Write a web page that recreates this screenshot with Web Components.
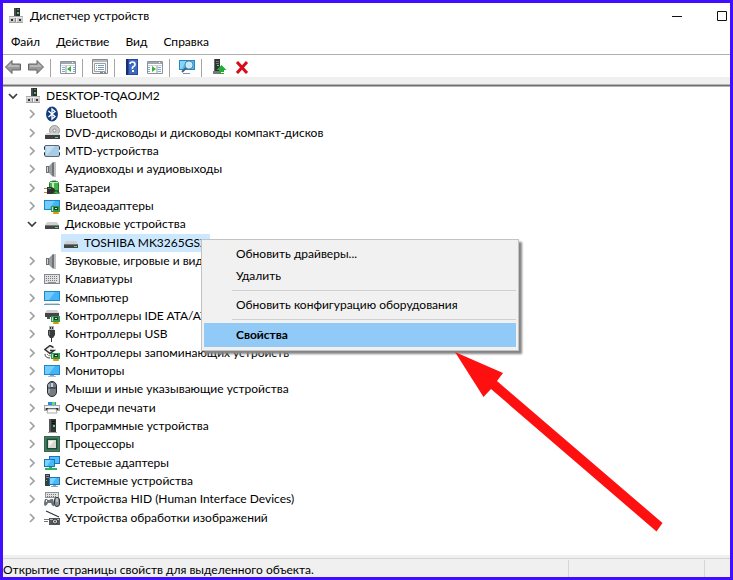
<!DOCTYPE html>
<html lang="ru">
<head>
<meta charset="utf-8">
<meta name="viewport" content="width=device-width, initial-scale=1">
<title>Диспетчер устройств</title>
<style>
  html, body {
    margin: 0;
    min-height: 100vh;
  }
  body {
    display: flex;
    position: relative;
    overflow: hidden;
    font: 12px/16px Lato, "Open Sans", sans-serif;
    color: #000;
  }
</style>
</head>
<body>
<device-manager></device-manager>

<script>
const MONITOR = `<path d="M0 2h16v10H0z" fill="#1b86c9"/><path d="M1 3h14v8H1z" fill="#42b4f7"/><path d="M1 3h10L5 11H1z" fill="#72cdfd"/>`;
const BOARD = `<path d="M7 8h9v6H7z" fill="#2f9a4b"/><path d="M10 9h4v3h-4z" fill="#17422c"/><path d="M11 10h2v1h-2z" fill="#c8e0cb"/><path d="M8 9h1v4H8z" fill="#b8dfae"/><path d="M9 14h6v2H9z" fill="#f6b21b"/><path d="M11 14v2M13 14v2" stroke="#c67a08"/>`;

const ICONS = {
  computer: `<path d="M6 0h6v9H6z" fill="#4a4d50"/><path d="M8 0h4v9H8z" fill="#2b2d2f"/><path d="M9 1h2v1H9z" fill="#777"/><path d="M9 4h2v2H9z" fill="#3fc765"/><path d="M1 8h14v7H1z" fill="#c9c9c9"/><path d="M1 8h14v1H1z" fill="#a9a9a9"/><path d="M2 9h12v1H2z" fill="#ececec"/><path d="M1 14h14v1H1z" fill="#a5a5a5"/><path d="M3 11h2v2H3zM11 11h2v2h-2z" fill="#333"/><path d="M7 10h1v4H7z" fill="#8d8d8d"/><path d="M8 10h1v4H8z" fill="#f4f4f4"/>`,
  bluetooth: `<ellipse cx="8" cy="8" rx="6" ry="7.500" fill="#143d80"/><path d="M4.500 5l6.500 5.500L8 13V3l3 2.500L4.500 11" fill="none" stroke="#fff" stroke-width="1.300"/>`,
  dvd: `<circle cx="10.500" cy="5.500" r="5" fill="#c9c9c9" stroke="#999"/><circle cx="10.500" cy="5.500" r="1.500" fill="#fff" stroke="#8b8b8b"/><path d="M3 8h11l2 2H1z" fill="#d4d4d4"/><path d="M1 10h15v4H1z" fill="#3f4042"/><path d="M11 12h3v1h-3z" fill="#4fe070"/>`,
  mtd: `<rect x=".5" y="2.500" width="15" height="11" rx="1.500" fill="#a9cbe6" stroke="#5b6873"/><path d="M2 3h9L3 12H2z" fill="#c4dff3"/><path d="M0 4h1v2H0zM0 10h1v2H0zM15 4h1v2h-1zM15 10h1v2h-1z" fill="#2b2f33"/><path d="M0 7h1v2H0zM15 7h1v2h-1z" fill="#fff"/>`,
  speaker: `<path d="M2 5h4v7H2z" fill="#6d7176"/><path d="M3 6h1v5H3z" fill="#d4d7d9"/><path d="M5 5l4-4v15l-4-4z" fill="#9a9ea2"/><path d="M8 2l2-1v15l-2-2z" fill="#6f7377"/><path d="M10 1h2v15h-2z" fill="#bfc3c6"/>`,
  battery: `<path d="M8 0h4v2H8z" fill="#b9b9b9"/><rect x="5.500" y="1.500" width="9" height="12" rx="2" fill="#3fb545" stroke="#1f7a2a"/><path d="M8 3h2v5H8z" fill="#c5f4bb"/><path d="M6 2h8v1H6z" fill="#d9d9d9"/><path d="M3 7h4q4 1 4 3.500T7 14H3z" fill="#2f3030"/><path d="M4 8h3v1H4z" fill="#777"/><path d="M0 8h3v1H0zM0 12h3v1H0z" fill="#c28a2a"/><path d="M11 11q4-1 4 3" fill="none" stroke="#222"/>`,
  display: `${MONITOR}${BOARD}`,
  disk: `<path d="M3 6h10l2 3H1z" fill="#d0d0d0"/><path d="M1 9h14v4H1z" fill="#434548"/><path d="M1 9h14v1H1z" fill="#77797b"/><path d="M11 11h3v1h-3z" fill="#4ee36c"/>`,
  keyboard: `<path d="M0 3h16v10H0z" fill="#85898d"/><path d="M1 4h14v8H1z" fill="#dfe1e3"/><path d="M2 5.500h12M2 7.500h12M2 9.500h12" stroke="#777b80" stroke-dasharray="1 1"/><path d="M4 11h8v1H4z" fill="#8c9094"/>`,
  pc: `<path d="M0 1h16v10H0z" fill="#1b86c9"/><path d="M1 2h14v8H1z" fill="#42b4f7"/><path d="M1 2h10L5 10H1z" fill="#72cdfd"/><path d="M1 13h14v1H1z" fill="#c6d6e2"/><path d="M0 14h16v1H0z" fill="#6f9bbb"/>`,
  ide: `<path d="M3 2h10l2 3H1z" fill="#d0d0d0"/><path d="M1 5h14v4H1z" fill="#434548"/><path d="M3 9h3v2H3z" fill="#555"/>${BOARD}`,
  usb: `<path d="M5 0h5v4H5z" fill="#aaa"/><path d="M6 1h1v2H6zM8 1h1v2H8z" fill="#333"/><path d="M4 4h7v5l-2 3H6l-2-3z" fill="#393b3d"/><path d="M5 5h1v4H5z" fill="#777"/><path d="M7 12h1v4H7z" fill="#333"/>`,
  storage: `<path d="M9.500 2.500L6 .5 1 4.500l5 4 4-3H6" fill="#f0f0f0" stroke="#333" stroke-width="1.500"/><path d="M1 9q0 4 5 4" fill="none" stroke="#444"/><path d="M3 9q1 2 4 2" fill="none" stroke="#888"/>${BOARD}`,
  monitor: MONITOR + `<path d="M6 12h4v1H6z" fill="#8ca5b5"/><path d="M4 13h8v1H4z" fill="#b0c1cc"/>`,
  mouse: `<rect x="3.500" y=".5" width="9" height="15" rx="4.500" fill="#767c82" stroke="#282c30"/><path d="M5 3v9" stroke="#c9cdd1"/><path d="M8 1v6M4 7h8" stroke="#2a2e32"/><path d="M7 2h2v4H7z" fill="#b7dafa"/>`,
  printer: `<path d="M4 2h8v4H4z" fill="#278fdc"/><path d="M8 2h3v3H8z" fill="#65dd67"/><path d="M0 5h16v6H0z" fill="#a2a6aa"/><path d="M1 6h14v2H1z" fill="#f4f4f4"/><path d="M2 8h12v2H2z" fill="#303336"/><path d="M4 9h8l1 4H3z" fill="#fff" stroke="#aaa"/>`,
  tower: `<path d="M5 1h7v13H5z" fill="#303234"/><path d="M5 1h2v13H5z" fill="#55585b"/><path d="M8 3h3v1H8zM8 5h3v1H8z" fill="#111"/><path d="M9 7h2v2H9z" fill="#49df68"/><path d="M4 14h9v1H4z" fill="#a3a3a3"/>`,
  cpu: `<path d="M0 0h16v16H0z" fill="#34684e"/><path d="M1.500 1.500h13v13h-13z" fill="none" stroke="#5f8f76" stroke-dasharray="1 1"/><path d="M3 3h10v10H3z" fill="#1d4c35"/><path d="M4 4h8v8H4z" fill="#d8d8d2"/><path d="M5 5h5L5 11z" fill="#f4f4f0"/>`,
  network: `<path d="M5 1h11v8H5z" fill="#1876ba"/><path d="M6 2h9v6H6z" fill="#55bff9"/><path d="M0 4h11v8H0z" fill="#1876ba"/><path d="M1 5h9v6H1z" fill="#4ab7f7"/><path d="M1 5h6l-4 6H1z" fill="#7dd3ff"/><path d="M5 12h3v1h5v2H1v-2h4z" fill="#30b357"/>`,
  system: `<path d="M1 1h5v12H1z" fill="#3b3e41"/><path d="M2 2h3v1H2zM2 4h3v1H2z" fill="#85898d"/><path d="M2 7h1v1H2z" fill="#46df68"/><path d="M5 4h11v8H5z" fill="#1876ba"/><path d="M6 5h9v6H6z" fill="#4ab7f7"/><path d="M6 5h6l-4 6H6z" fill="#7dd3ff"/><path d="M9 12h3v1H9zM7 13h7v1H7z" fill="#8ba4b4"/>`,
  hid: `<path d="M1 1h14v6H1z" fill="#8e9296"/><path d="M2 2h12v4H2z" fill="#e0e2e3"/><path d="M3 3.500h10M3 5.500h10" stroke="#777" stroke-dasharray="1 1"/><path d="M1 15q-2-1 0-7h2q1 2 4 0h2q2 6 1 7-2 1-3-3H4q-1 3-3 3z" fill="#6b737b"/><path d="M2 9h1v2H2z" fill="#e7eef6"/><rect x="10.500" y="6.500" width="5" height="9" rx="2.500" fill="#8c9298" stroke="#303438"/><path d="M13 7v4" stroke="#dceeff"/>`,
  imaging: `<path d="M2 1l13 6" stroke="#333" stroke-width="1.200"/><path d="M0 9h5v1H0zM0 11h4v1H0z" fill="#777"/><path d="M5 8h11v7H5z" fill="#55595c"/><path d="M6 9h9v1H6z" fill="#babdc0"/><circle cx="11" cy="11.500" r="2.500" fill="#dadddf" stroke="#292c2e"/><circle cx="11" cy="11.500" r="1" fill="#444"/>`,
  back: `<path d="M.5 8L7 1.500V5h8.500v6H7v3.500z" fill="#999" stroke="#626262"/><path d="M2 8l4-4v2h8v2z" fill="#b8b8b8"/>`,
  forward: `<path d="M15.500 8L9 1.500V5H.5v6H9v3.500z" fill="#999" stroke="#626262"/><path d="M14 8l-4-4v2H2v2z" fill="#b8b8b8"/>`,
  tree: `<path d="M.5 2.500h15v12H.5z" fill="#fff" stroke="#8a939c"/><path d="M1 3h14v2H1z" fill="#9ca7b0"/><path d="M12 3h1v1h-1z" fill="#fff"/><path d="M1 6h14v1H1z" fill="#ccd2d6"/><path d="M6 7v7" stroke="#8a939c"/><path d="M2 8.500h3M2 10.500h3M2 12.500h3M13 8.500h2M13 10.500h2M13 12.500h2" stroke="#7faad0"/><path d="M11 7v6l-4-3z" fill="#33b13a"/>`,
  props: `<path d="M.5 .5h15v14H.5z" fill="#f4f4f4" stroke="#858a8f"/><path d="M1 1h14v2H1z" fill="#b5babf"/><path d="M2.500 4.500h11v8h-11z" fill="#fff" stroke="#999fa5"/><path d="M4 6.500h1M4 8.500h1M4 10.500h1M6 6.500h6M6 8.500h6M6 10.500h6" stroke="#7c9db8"/><path d="M8 13h3v1H8zM12 13h2v1h-2z" fill="#888"/>`,
  help: `<path d="M2 0h12v16H2z" fill="#234aa3"/><path d="M2 0h2v16H2z" fill="#153073"/><path d="M5 1h8v14H5z" fill="#4269c0"/><path d="M6 5q0-2 2.500-2T11 5.500Q11 7 9.500 7.500T8.500 10" fill="none" stroke="#fff" stroke-width="1.600"/><path d="M8 11h2v2H8z" fill="#fff"/>`,
  actions: `<path d="M.5 2.500h15v12H.5z" fill="#fff" stroke="#8a939c"/><path d="M1 3h14v2H1z" fill="#9ca7b0"/><path d="M12 3h1v1h-1z" fill="#fff"/><path d="M1 6h14v1H1z" fill="#ccd2d6"/><path d="M10 7v7" stroke="#8a939c"/><path d="M11 8.500h3M11 10.500h3M11 12.500h3M1 8.500h2M1 10.500h2M1 12.500h2" stroke="#7faad0"/><path d="M5 7v6l4-3z" fill="#33b13a"/>`,
  scan: `<path d="M0 1h16v10H0z" fill="#2588c5"/><path d="M1 2h14v8H1z" fill="#50b9ee"/><path d="M1 2h6l-4 8H1z" fill="#86d4fa"/><path d="M4 14h7v1H4z" fill="#7896a9"/><path d="M8 8l-5 5" stroke="#45657b" stroke-width="2"/><circle cx="10" cy="6" r="3.500" fill="#c5e9fb" stroke="#e9f4fa"/><circle cx="10" cy="6" r="4" fill="none" stroke="#497894" stroke-width=".8"/>`,
  update: `<path d="M3 0h6v12H3z" fill="#303234"/><path d="M3 0h1v12H3z" fill="#686b6e"/><path d="M5 2h3v1H5zM5 4h3v1H5z" fill="#777"/><path d="M6 6h2v1H6z" fill="#43e46a"/><path d="M2 12h8v3H2z" fill="#777"/><path d="M10.500 6l5 5H13v2H8v-2H5.500z" fill="#27aa37"/><path d="M8 14h5v1H8z" fill="#27aa37"/>`,
  remove: `<path d="M3 3l10 11M13 3L3 14" fill="none" stroke="#d80b17" stroke-width="3"/>`,
  minimize: `<path d="M3 8h10v1H3z" fill="#111"/>`,
  maximize: `<path d="M3.500 3.500h9v9h-9z" fill="none" stroke="#111"/>`,
  closed: `<path d="M6 4l4 4-4 4" fill="none" stroke="#a0a0a0" stroke-width="1.700"/>`,
  open: `<path d="M4 6l4 4 4-4" fill="none" stroke="#3c3c3c" stroke-width="1.700"/>`,
};

const TREE = [
  [0, "computer", "DESKTOP-TQAOJM2", "open"],
  [1, "bluetooth", "Bluetooth", "closed"],
  [1, "dvd", "DVD-дисководы и дисководы компакт-дисков", "closed"],
  [1, "mtd", "MTD-устройства", "closed"],
  [1, "speaker", "Аудиовходы и аудиовыходы", "closed"],
  [1, "battery", "Батареи", "closed"],
  [1, "display", "Видеоадаптеры", "closed"],
  [1, "disk", "Дисковые устройства", "open"],
  [2, "disk", "TOSHIBA MK3265GSX", "", true],
  [1, "speaker", "Звуковые, игровые и видеоустройства", "closed"],
  [1, "keyboard", "Клавиатуры", "closed"],
  [1, "pc", "Компьютер", "closed"],
  [1, "ide", "Контроллеры IDE ATA/ATAPI", "closed"],
  [1, "usb", "Контроллеры USB", "closed"],
  [1, "storage", "Контроллеры запоминающих устройств", "closed"],
  [1, "monitor", "Мониторы", "closed"],
  [1, "mouse", "Мыши и иные указывающие устройства", "closed"],
  [1, "printer", "Очереди печати", "closed"],
  [1, "tower", "Программные устройства", "closed"],
  [1, "cpu", "Процессоры", "closed"],
  [1, "network", "Сетевые адаптеры", "closed"],
  [1, "system", "Системные устройства", "closed"],
  [1, "hid", "Устройства HID (Human Interface Devices)", "closed"],
  [1, "imaging", "Устройства обработки изображений", "closed"],
];

class DmIcon extends HTMLElement {
  connectedCallback() {
    this.attachShadow({ mode: "open" });
    this.shadowRoot.innerHTML = `
      <style>
        :host { display: block; flex: none; width: 16px; height: 16px; }
        svg { display: block; width: 100%; height: 100%; }
      </style>
      <svg viewBox="0 0 16 16" aria-hidden="true">${ICONS[this.getAttribute("name")] || ""}</svg>
    `;
  }
}

/** Icon-only button, used in the title bar and in the toolbar. */
class DmButton extends HTMLElement {
  connectedCallback() {
    this.attachShadow({ mode: "open" });
    this.shadowRoot.innerHTML = `
      <style>
        :host { display: block; width: 20px; }
        button {
          display: flex;
          align-items: center;
          justify-content: center;
          width: 100%;
          height: 20px;
          padding: 0;
          border: 0;
          background: none;
        }
        button:hover { background: #e5f3ff; }
      </style>
      <button type="button" aria-label="${this.getAttribute("label")}">
        <dm-icon name="${this.getAttribute("icon")}"></dm-icon>
      </button>
    `;
  }
}

class MenuBar extends HTMLElement {
  connectedCallback() {
    this.attachShadow({ mode: "open" });
    this.shadowRoot.innerHTML = `
      <style>
        :host { display: flex; align-items: center; height: 25px; }
        ::slotted(button) {
          height: 22px;
          padding: 0 8px;
          border: 0;
          background: none;
          font: inherit;
          color: inherit;
        }
      </style>
      <slot></slot>
    `;
  }
}

class ToolBar extends HTMLElement {
  connectedCallback() {
    this.attachShadow({ mode: "open" });
    this.shadowRoot.innerHTML = `
      <style>
        :host {
          display: flex;
          align-items: flex-end;
          gap: 3px;
          height: 22px;
          border-top: 1px solid #b0b0b0;
        }
        ::slotted(i) {
          width: 1px;
          height: 18px;
          margin: 0 4px 0 1px;
          background: #a5a5a5;
        }
      </style>
      <slot></slot>
    `;
  }
}

class TreeRow extends HTMLElement {
  connectedCallback() {
    const state = this.getAttribute("state");
    const expander = state
      ? `<button type="button" aria-label="${state === "open" ? "Свернуть" : "Развернуть"}"><dm-icon name="${state}"></dm-icon></button>`
      : `<span class="blank"></span>`;
    this.attachShadow({ mode: "open" });
    this.shadowRoot.innerHTML = `
      <style>
        :host {
          display: flex;
          align-items: center;
          min-height: 0;
          padding-left: 1px;
          white-space: nowrap;
        }
        :host([level="1"]) { padding-left: 20px; }
        :host([level="2"]) { padding-left: 39px; }
        button, .blank { flex: none; width: 19px; height: 16px; padding: 0; border: 0; background: none; }
        button dm-icon { margin-left: 1px; }
        .label { display: flex; align-items: center; gap: 5px; padding: 1px 2px; }
        :host([selected]) .label { background: #cce8ff; }
      </style>
      ${expander}
      <span class="label"><dm-icon name="${this.getAttribute("icon")}"></dm-icon><slot></slot></span>
    `;
  }
}

class DeviceTree extends HTMLElement {
  connectedCallback() {
    this.attachShadow({ mode: "open" });
    this.shadowRoot.innerHTML = `
      <style>
        :host {
          display: grid;
          grid-auto-rows: minmax(16px, 1fr);
          flex: 1;
          padding-bottom: 28px;
          background: #fff;
        }
      </style>
    `;
    TREE.forEach(([level, icon, text, state, selected]) => {
      const row = document.createElement("tree-row");
      row.setAttribute("role", "treeitem");
      row.setAttribute("level", level);
      row.setAttribute("aria-level", level + 1);
      row.setAttribute("icon", icon);
      row.setAttribute("state", state);
      row.toggleAttribute("selected", Boolean(selected));
      row.textContent = text;
      this.shadowRoot.appendChild(row);
    });
  }
}

class ContextMenu extends HTMLElement {
  connectedCallback() {
    this.attachShadow({ mode: "open" });
    this.shadowRoot.innerHTML = `
      <style>
        :host {
          display: flex;
          flex-direction: column;
          box-sizing: border-box;
          width: 318px;
          padding: 3px 2px;
          border: 1px solid #c3c3c3;
          background: #f1f1f1;
          box-shadow: 3px 3px 2px #858585;
        }
        ::slotted(button) {
          height: 22px;
          padding: 0 0 0 32px;
          border: 0;
          background: none;
          font: inherit;
          color: inherit;
          text-align: left;
        }
        ::slotted(button.default) { height: 24px; background: #91c9f7; font-weight: bold; }
        ::slotted(hr) {
          width: auto;
          height: 1px;
          margin: 3px 0 3px 28px;
          border: 0;
          background: #d0d0d0;
        }
      </style>
      <slot></slot>
    `;
  }
}

class PointerArrow extends HTMLElement {
  connectedCallback() {
    this.attachShadow({ mode: "open" });
    this.shadowRoot.innerHTML = `
      <style>
        :host { display: block; width: 208px; height: 180px; pointer-events: none; }
        svg { display: block; }
      </style>
      <svg width="208" height="180" viewBox="0 0 208 180" aria-hidden="true">
        <path d="M0 0l48 21-6 8 165.500 142-6 8.500L36 37l-7.500 8z" fill="#ff1010"/>
      </svg>
    `;
  }
}

class StatusBar extends HTMLElement {
  connectedCallback() {
    this.attachShadow({ mode: "open" });
    this.shadowRoot.innerHTML = `
      <style>
        :host {
          display: grid;
          grid-template-columns: 1fr 136px 26px;
          height: 18px;
          border-top: 1px solid #d5d5d5;
          margin-top: 3px;
          background: #f0f0f0;
          white-space: nowrap;
        }
        .text { line-height: 22px; height: 18px; overflow: hidden; }
        .cell { border-left: 1px solid #d5d5d5; margin-top: 1px; }
      </style>
      <div class="text"><slot></slot></div>
      <div class="cell"></div>
      <div class="cell"></div>
    `;
  }
}

class DeviceManager extends HTMLElement {
  connectedCallback() {
    this.attachShadow({ mode: "open" });
    this.shadowRoot.innerHTML = `
      <style>
        :host {
          display: flex;
          flex: 1;
          flex-direction: column;
          box-sizing: border-box;
          min-width: 0;
          min-height: 100vh;
          border: 3px solid #400fff;
          background: #fff;
        }
        header {
          display: flex;
          align-items: center;
          gap: 6px;
          height: 26px;
          padding-left: 5px;
        }
        h1 { flex: 1; margin: 0; font: inherit; }
        header dm-button { width: 46px; }
        header dm-button:last-child { width: 16px; margin-left: 8px; }
        .edge {
          height: 7px;
          background: #f0f0f0;
          border-bottom: 1px solid #b5b5b5;
        }
        .rule { height: 1px; background: #6f6f6f; border-bottom: 1px solid #b5b5b5; }
        .bottom { background: #f0f0f0; }
        context-menu { position: absolute; left: 201px; top: 239px; }
        pointer-arrow { position: absolute; left: 455px; top: 352px; }
      </style>
      <header>
        <dm-icon name="computer"></dm-icon>
        <h1>Диспетчер устройств</h1>
        <dm-button icon="minimize" label="Свернуть окно"></dm-button>
        <dm-button icon="maximize" label="Развернуть окно"></dm-button>
      </header>
      <menu-bar>
        <button type="button">Файл</button>
        <button type="button">Действие</button>
        <button type="button">Вид</button>
        <button type="button">Справка</button>
      </menu-bar>
      <tool-bar>
        <dm-button icon="back" label="Назад"></dm-button>
        <dm-button icon="forward" label="Вперед"></dm-button>
        <i></i>
        <dm-button icon="tree" label="Дерево консоли"></dm-button>
        <i></i>
        <dm-button icon="props" label="Показать свойства"></dm-button>
        <i></i>
        <dm-button icon="help" label="Помощь"></dm-button>
        <dm-button icon="actions" label="Панель действий"></dm-button>
        <i></i>
        <dm-button icon="scan" label="Обновить конфигурацию"></dm-button>
        <i></i>
        <dm-button icon="update" label="Обновить драйвер"></dm-button>
        <dm-button icon="remove" label="Удалить устройство"></dm-button>
      </tool-bar>
      <div class="edge"></div>
      <div class="rule"></div>
      <device-tree role="tree"></device-tree>
      <div class="bottom">
        <status-bar>Открытие страницы свойств для выделенного объекта.</status-bar>
      </div>
      <context-menu>
        <button type="button">Обновить драйверы...</button>
        <button type="button">Удалить</button>
        <hr>
        <button type="button">Обновить конфигурацию оборудования</button>
        <hr>
        <button type="button" class="default">Свойства</button>
      </context-menu>
      <pointer-arrow></pointer-arrow>
    `;
  }
}

customElements.define("dm-icon", DmIcon);
customElements.define("dm-button", DmButton);
customElements.define("menu-bar", MenuBar);
customElements.define("tool-bar", ToolBar);
customElements.define("tree-row", TreeRow);
customElements.define("device-tree", DeviceTree);
customElements.define("context-menu", ContextMenu);
customElements.define("pointer-arrow", PointerArrow);
customElements.define("status-bar", StatusBar);
customElements.define("device-manager", DeviceManager);
</script>
</body>
</html>
